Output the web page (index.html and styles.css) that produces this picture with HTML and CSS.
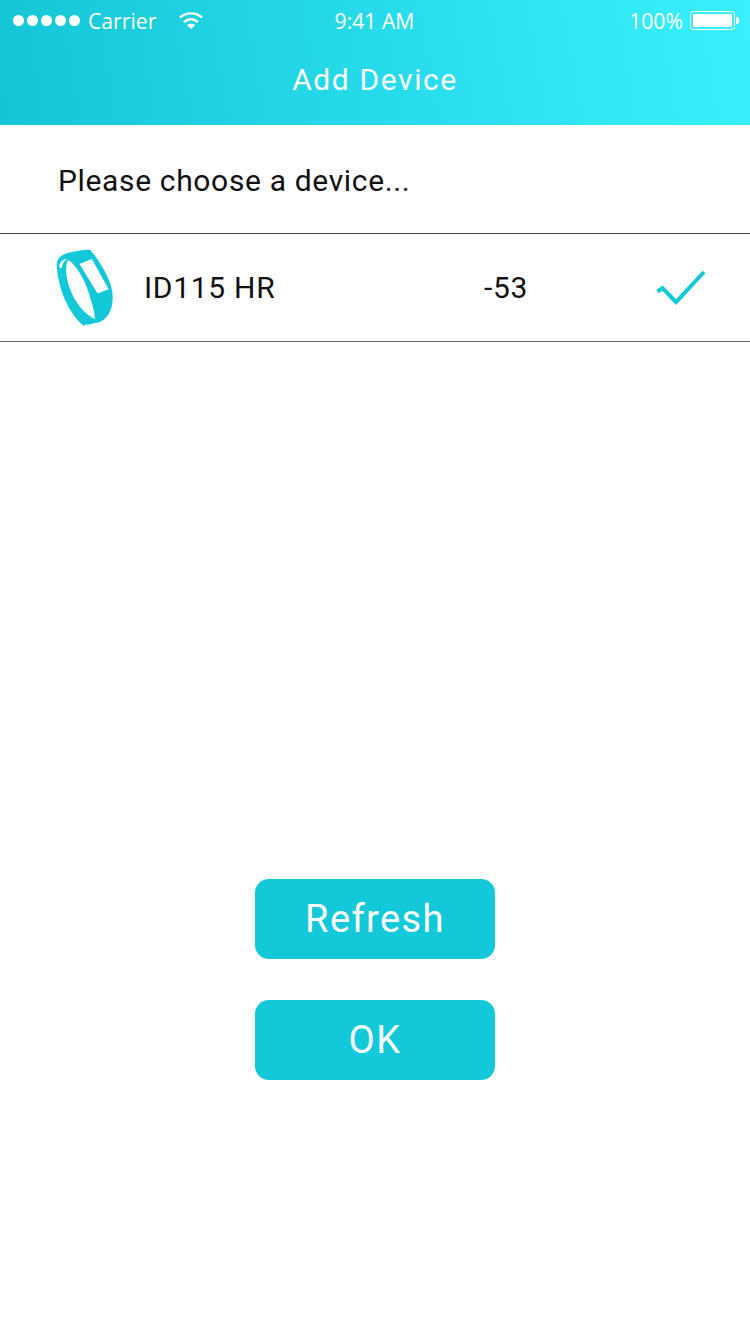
FILE: index.html
```html
<!DOCTYPE html>
<html lang="en">
<head>
    <meta charset="UTF-8">
    <meta name="viewport" content="width=device-width, initial-scale=1.0">
    <title>Add Device</title>
    <link rel="stylesheet" href="styles.css">
</head>
<body>

    <header class="app-header">
        <div class="status-bar">
            <div class="status-left">
                <span class="signal">
                    <i></i><i></i><i></i><i></i><i></i>
                </span>
                <span class="carrier">Carrier</span>
                <svg class="wifi" width="26" height="18" viewBox="0 0 26 18">
                    <path d="M2 6.500C8.500 1 17.500 1 24 6.500" fill="none" stroke="#fff" stroke-width="2.400"/>
                    <path d="M6 11C10.500 7.400 15.500 7.400 20 11" fill="none" stroke="#fff" stroke-width="2.400"/>
                    <path d="M8.800 14C11.500 12.300 14.500 12.300 17.200 14L13 18Z" fill="#fff"/>
                </svg>
            </div>
            <div class="status-time">9:41 AM</div>
            <div class="status-right">
                <span>100%</span>
                <span class="battery"><b></b></span>
                <span class="battery-tip"></span>
            </div>
        </div>
        <h1 class="app-title">Add Device</h1>
    </header>

    <p class="prompt">Please choose a device...</p>

    <div class="device-row">
        <svg class="band-icon" width="57" height="78" viewBox="48 55 170 233">
            <path d="M50 102C50 82 65 72 85 66C110 62 135 55 150 58C170 80 200 125 212 165C222 200 218 240 195 262C185 272 172 276 165 277L130 284C95 255 55 190 50 102Z" fill="#13c8d8"/>
            <path d="M84 88C106 100 134 145 147 190C156 220 164 245 164 264C135 252 104 215 88 170C78 140 74 105 84 88Z" fill="#fff"/>
            <path d="M57 108C59 95 68 85 82 84C72 90 66 100 64 114Z" fill="#fff"/>
            <path d="M118 100L155 85L205 175L172 188Z" fill="#fff"/>
            <path d="M135 281C145 286 155 284 166 276" fill="none" stroke="#fff" stroke-width="3"/>
        </svg>
        <span class="device-name">ID115 HR</span>
        <span class="device-rssi">-53</span>
        <svg class="check" width="50" height="36" viewBox="0 0 50 36">
            <path d="M1.500 21.500L6.500 18L20 32L48 2" fill="none" stroke="#13c8d8" stroke-width="4"/>
        </svg>
    </div>

    <div class="actions">
        <button class="btn">Refresh</button>
        <button class="btn">OK</button>
    </div>

</body>
</html>
```

FILE: styles.css
```css
body {
    font-family: Roboto, "Liberation Sans", sans-serif;
    margin: 0;
    padding: 0;
    background: #fff;
    color: #111;
}
.app-header {
    height: 125px;
    background: linear-gradient(80deg, #15c5d5 0%, #3af0ff 100%);
    color: #fff;
}
.status-bar {
    display: grid;
    grid-template-columns: 1fr auto 1fr;
    align-items: center;
    height: 40px;
    padding: 0 11px 0 13px;
    font-family: "Open Sans", sans-serif;
    font-size: 21.2px;
}
.status-left {
    display: flex;
    align-items: center;
}
.status-time {
    margin-right: 3px;
}
.signal {
    display: flex;
    gap: 3px;
}
.signal i {
    width: 11px;
    height: 11px;
    border-radius: 50%;
    background: #fff;
}
.carrier {
    margin-left: 8px;
}
.wifi {
    margin-left: 22px;
}
.status-right {
    display: flex;
    align-items: center;
    justify-content: flex-end;
}
.battery {
    box-sizing: border-box;
    width: 45px;
    height: 19px;
    margin-left: 7px;
    padding: 2px;
    border: 1px solid #fff;
    border-radius: 3px;
}
.battery b {
    display: block;
    height: 100%;
    background: #fff;
}
.battery-tip {
    width: 3px;
    height: 7px;
    margin-left: 1px;
    background: #fff;
    border-radius: 0 2px 2px 0;
}
.app-title {
    margin: 2px 0 0;
    font-size: 30px;
    font-weight: 400;
    line-height: 76px;
    text-align: center;
    letter-spacing: 1.6px;
}
.prompt {
    box-sizing: border-box;
    height: 109px;
    margin: 0;
    padding-left: 58px;
    font-size: 30px;
    line-height: 112px;
    letter-spacing: 0.65px;
    border-bottom: 1px solid #444;
}
.device-row {
    box-sizing: border-box;
    display: flex;
    align-items: center;
    height: 108px;
    padding-left: 56px;
    font-size: 30px;
    letter-spacing: 0.7px;
    border-bottom: 1px solid #666;
}
.device-name {
    margin-left: 31px;
    width: 340px;
}
.device-rssi {
    width: 172px;
}
.actions {
    display: flex;
    flex-direction: column;
    align-items: center;
    gap: 41px;
    margin-top: 537px;
}
.btn {
    width: 240px;
    height: 80px;
    padding: 0;
    border: none;
    border-radius: 14px;
    background: #13c8d8;
    color: #fff;
    font-family: Roboto, "Liberation Sans", sans-serif;
    font-size: 38px;
    letter-spacing: 1.4px;
}
```
